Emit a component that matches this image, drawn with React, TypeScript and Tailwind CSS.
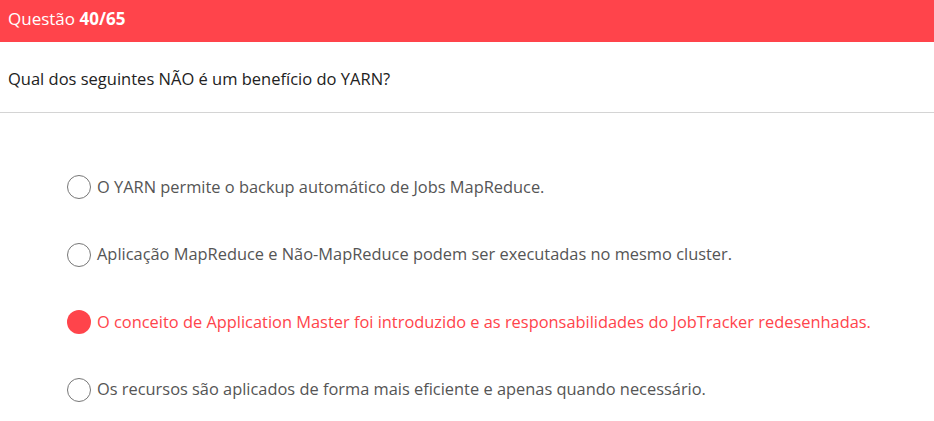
import React from "react";

const options = [
  "O YARN permite o backup automático de Jobs MapReduce.",
  "Aplicação MapReduce e Não-MapReduce podem ser executadas no mesmo cluster.",
  "O conceito de Application Master foi introduzido e as responsabilidades do JobTracker redesenhadas.",
  "Os recursos são aplicados de forma mais eficiente e apenas quando necessário.",
];

export default function App() {
  const selected = 2;
  return (
    <div className="w-[934px] h-[421px] bg-white overflow-hidden" style={{ fontFamily: '"Open Sans", sans-serif' }}>
      <div className="h-[42px] bg-[#ff444b] flex items-center px-[8px] pb-[4px] text-white text-[17px]">
        <span>Questão <span className="font-bold">40/65</span></span>
      </div>
      <div className="h-[71px] flex items-center px-[8px] pt-[4px] text-[16.5px] text-[#222] border-b border-[#d4d4d4]">
        Qual dos seguintes NÃO é um benefício do YARN?
      </div>
      <div className="flex flex-col pl-[67px] pt-[62px] gap-[43.5px]">
        {options.map((o, i) => (
          <div key={i} className="flex items-center h-[24px] gap-[6px]">
            {i === selected ? (
              <div className="w-[24px] h-[24px] rounded-full bg-[#ff444b]" />
            ) : (
              <div className="w-[24px] h-[24px] rounded-full border border-[#777]" />
            )}
            <span className={`text-[16.4px] ${i === selected ? "text-[#ff444b]" : "text-[#555]"}`}>{o}</span>
          </div>
        ))}
      </div>
    </div>
  );
}
